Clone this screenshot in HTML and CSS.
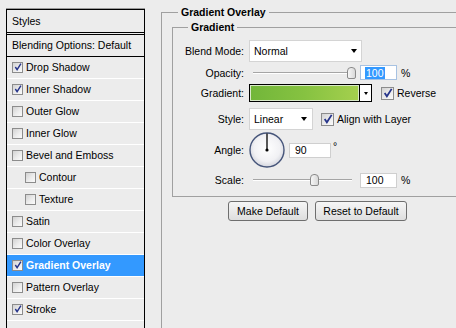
FILE: index.html
```html
<!DOCTYPE html>
<html>
<head>
<meta charset="utf-8">
<link rel="stylesheet" href="styles.css">
</head>
<body>
<div class="dialog">
  <div class="styles-panel">
    <div class="sp-head">Styles</div>
    <div class="sp-blend">Blending Options: Default</div>
    <ul class="sp-list">
      <li class="sp-item"><span class="cb"><svg viewBox="0 0 9 9"><path d="M1.5 4.5 L3.5 7.5 L7.8 0.8"/></svg></span>Drop Shadow</li>
      <li class="sp-item"><span class="cb"><svg viewBox="0 0 9 9"><path d="M1.5 4.5 L3.5 7.5 L7.8 0.8"/></svg></span>Inner Shadow</li>
      <li class="sp-item"><span class="cb"></span>Outer Glow</li>
      <li class="sp-item"><span class="cb"></span>Inner Glow</li>
      <li class="sp-item"><span class="cb"></span>Bevel and Emboss</li>
      <li class="sp-item sub"><span class="cb"></span>Contour</li>
      <li class="sp-item sub"><span class="cb"></span>Texture</li>
      <li class="sp-item"><span class="cb"></span>Satin</li>
      <li class="sp-item"><span class="cb"></span>Color Overlay</li>
      <li class="sp-item active"><span class="cb"><svg viewBox="0 0 9 9"><path d="M1.5 4.5 L3.5 7.5 L7.8 0.8"/></svg></span>Gradient Overlay</li>
      <li class="sp-item"><span class="cb"></span>Pattern Overlay</li>
      <li class="sp-item"><span class="cb"><svg viewBox="0 0 9 9"><path d="M1.5 4.5 L3.5 7.5 L7.8 0.8"/></svg></span>Stroke</li>
      <li class="sp-item empty"></li>
    </ul>
  </div>

  <div class="settings">
    <fieldset class="group outer">
      <legend>Gradient Overlay</legend>
      <fieldset class="group inner">
        <legend>Gradient</legend>

        <div class="row r-blend">
          <span class="lbl">Blend Mode:</span>
          <div class="select sel-blend"><span class="sel-text">Normal</span><span class="arrow"></span></div>
        </div>

        <div class="row r-opacity">
          <span class="lbl">Opacity:</span>
          <div class="slider"><span class="track"></span><span class="thumb thumb-opacity"></span></div>
          <div class="num num-focus"><span class="hl">100</span></div>
          <span class="unit">%</span>
        </div>

        <div class="row r-gradient">
          <span class="lbl">Gradient:</span>
          <div class="grad-picker"><span class="grad-swatch"></span><span class="grad-drop"><span class="arrow small"></span></span></div>
          <span class="cb cb-right cb-reverse"><svg viewBox="0 0 9 9"><path d="M1.5 4.5 L3.5 7.5 L7.8 0.8"/></svg></span>
          <span class="cb-label">Reverse</span>
        </div>

        <div class="row r-style">
          <span class="lbl">Style:</span>
          <div class="select sel-style"><span class="sel-text">Linear</span><span class="arrow"></span></div>
          <span class="cb cb-right cb-align"><svg viewBox="0 0 9 9"><path d="M1.5 4.5 L3.5 7.5 L7.8 0.8"/></svg></span>
          <span class="cb-label">Align with Layer</span>
        </div>

        <div class="row r-angle">
          <span class="lbl">Angle:</span>
          <svg class="dial" width="36" height="36" viewBox="0 0 36 36">
            <defs>
              <radialGradient id="dialfill" cx="50%" cy="45%" r="55%">
                <stop offset="0" stop-color="#ffffff"/>
                <stop offset="0.7" stop-color="#f1f1f4"/>
                <stop offset="1" stop-color="#d4d6de"/>
              </radialGradient>
            </defs>
            <circle cx="18" cy="18" r="17" fill="url(#dialfill)" stroke="#46557a" stroke-width="1.4"/>
            <line x1="18" y1="18" x2="18" y2="1.5" stroke="#000" stroke-width="1.3"/>
            <circle cx="18" cy="18" r="1.6" fill="#000"/>
          </svg>
          <div class="num num-angle">90</div>
          <span class="deg">°</span>
        </div>

        <div class="row r-scale">
          <span class="lbl">Scale:</span>
          <div class="slider"><span class="track"></span><span class="thumb thumb-scale"></span></div>
          <div class="num">100</div>
          <span class="unit">%</span>
        </div>
      </fieldset>

      <div class="buttons">
        <button class="btn btn-make">Make Default</button>
        <button class="btn btn-reset">Reset to Default</button>
      </div>
    </fieldset>
  </div>
</div>
</body>
</html>
```

FILE: styles.css
```css
html, body {
  margin: 0;
  padding: 0;
}
body {
  background: #ececec;
  font-family: "Liberation Sans", Arial, sans-serif;
  font-size: 10.5px;
  color: #000;
  width: 456px;
  height: 328px;
  overflow: hidden;
}
.dialog {
  display: flex;
  align-items: flex-start;
  height: 328px;
  overflow: hidden;
}

/* ---------- left styles list ---------- */
.styles-panel {
  flex: none;
  margin: 9px 0 0 6px;
  width: 139px;
  height: 319px;
  box-sizing: border-box;
  border: 1px solid #000;
  border-bottom: none;
  box-shadow: 0 -1px 0 #9a9a9a;
  overflow: hidden;
}
.sp-head {
  height: 22px;
  box-sizing: border-box;
  border-bottom: 1px solid #000;
  padding: 0 0 1px 5px;
  height: 23px;
  display: flex;
  align-items: center;
}
.sp-blend {
  margin-top: 1px;
  height: 23px;
  box-sizing: border-box;
  border-top: 1px solid #000;
  border-bottom: 1px solid #000;
  padding: 0 0 2px 5px;
  display: flex;
  align-items: center;
}
.sp-list {
  list-style: none;
  margin: 0;
  padding: 0;
}
.sp-item {
  height: 22px;
  box-sizing: border-box;
  border-bottom: 1px solid #fff;
  padding: 0 0 2px 5px;
  display: flex;
  align-items: center;
  white-space: nowrap;
}
.sp-item .cb {
  margin-top: 1px;
}
.sp-item.sub {
  padding-left: 18px;
}
.sp-item.active {
  background: #3399ff;
  color: #fff;
  font-weight: bold;
}
.sp-item.empty {
  border-bottom: none;
}

/* ---------- checkbox ---------- */
.cb {
  flex: none;
  width: 11px;
  height: 11px;
  box-sizing: border-box;
  border: 1px solid #8c8c8c;
  background: linear-gradient(135deg, #d2d2d2 0%, #ececec 55%, #fbfbfb 100%);
  margin-right: 3px;
  display: flex;
  align-items: center;
  justify-content: center;
}
.cb svg {
  width: 8px;
  height: 8px;
  display: block;
}
.cb path {
  fill: none;
  stroke: #26348a;
  stroke-width: 1.6;
}
.cb-right {
  width: 13px;
  height: 13px;
}
.cb-right svg {
  width: 10px;
  height: 10px;
}
.cb-reverse {
  margin-left: 9px;
}
.cb-align {
  margin-left: 8px;
}
.cb-label {
  white-space: nowrap;
}

/* ---------- right settings ---------- */
.settings {
  flex: none;
  margin-left: 16px;
}
.group {
  border: 1px solid #a0a0a0;
  margin: 0;
  min-width: 0;
}
.group > legend {
  font-weight: bold;
  line-height: 12px;
  padding: 0 3px;
}
.outer {
  margin-top: 6px;
  width: 320px;
  height: 330px;
  box-sizing: border-box;
  padding: 3px 0 0 10px;
}
.outer > legend {
  margin-left: 6px;
}
.inner {
  padding: 7px 0 8px 10px;
}
.inner > legend {
  margin-left: 5px;
}

.row {
  display: flex;
  align-items: center;
  white-space: nowrap;
}
.lbl {
  flex: none;
  width: 61px;
  margin-right: 5px;
  text-align: right;
}
.r-blend { height: 22px; }
.r-opacity { height: 19px; margin-top: 1px; }
.r-gradient { height: 18px; margin-top: 2px; }
.r-style { height: 22px; margin-top: 6px; }
.r-angle { height: 36px; margin-top: 2px; }
.r-scale { height: 16px; margin-top: 4px; }

/* select */
.select {
  flex: none;
  height: 22px;
  box-sizing: border-box;
  border: 1px solid #d4d4d4;
  background: #fff;
  display: flex;
  align-items: center;
  justify-content: space-between;
  padding: 0 4px 0 4px;
}
.sel-blend { width: 113px; }
.sel-style { width: 64px; padding-right: 5px; }
.arrow {
  width: 0;
  height: 0;
  border-left: 3.5px solid transparent;
  border-right: 3.5px solid transparent;
  border-top: 4px solid #000;
}
.arrow.small {
  border-left-width: 2.5px;
  border-right-width: 2.5px;
  border-top-width: 3px;
}

/* slider */
.slider {
  flex: none;
  position: relative;
  width: 104px;
  height: 14px;
  margin-left: 4px;
  display: flex;
  align-items: center;
}
.track {
  display: block;
  width: 99px;
  height: 1px;
  background: #a5a5a5;
  border-bottom: 1px solid #fff;
}
.thumb {
  position: absolute;
  top: 1px;
  width: 9px;
  height: 12px;
  box-sizing: border-box;
  border: 1px solid #8a8a8a;
  border-radius: 4px 4px 2px 2px;
  background: linear-gradient(90deg, #f6f6f6, #d8d8d8);
}
.thumb-opacity { left: 94px; }
.thumb-scale { left: 57px; }

/* numeric fields */
.num {
  flex: none;
  width: 37px;
  height: 15px;
  box-sizing: border-box;
  border: 1px solid #cfcfcf;
  background: #fff;
  margin-left: 3px;
  padding-left: 5px;
  display: flex;
  align-items: center;
  line-height: 12px;
}
.num-focus {
  border-color: #a7c2e2;
}
.hl {
  background: #3399ff;
  color: #fff;
  padding: 0 1px;
  margin-left: -1px;
}
.unit {
  margin-left: 4px;
}
.num-angle {
  width: 42px;
  margin-left: 4px;
}
.deg {
  align-self: flex-start;
  margin-top: 8px;
  margin-left: 2px;
}

/* gradient picker */
.grad-picker {
  flex: none;
  display: flex;
  width: 123px;
  height: 18px;
  box-sizing: border-box;
  border: 1px solid #000;
}
.grad-swatch {
  flex: 1;
  box-shadow: inset 0 0 0 1px #d8e8c8;
  background: linear-gradient(90deg, #72b63a 0%, #86c241 50%, #a5d04e 100%);
}
.grad-drop {
  flex: none;
  width: 11px;
  border-left: 1px solid #000;
  background: #fff;
  display: flex;
  align-items: center;
  justify-content: center;
}

/* dial */
.dial {
  flex: none;
  display: block;
}

/* buttons */
.buttons {
  display: flex;
  margin: 4px 0 0 56px;
}
.btn {
  height: 20px;
  box-sizing: border-box;
  border: 1px solid #6e6e6e;
  border-radius: 3px;
  background: linear-gradient(#f6f6f6, #dedede);
  font-family: "Liberation Sans", Arial, sans-serif;
  font-size: 10.5px;
  color: #000;
  padding: 0;
}
.btn-make { width: 80px; }
.btn-reset { width: 92px; margin-left: 7px; }
```
